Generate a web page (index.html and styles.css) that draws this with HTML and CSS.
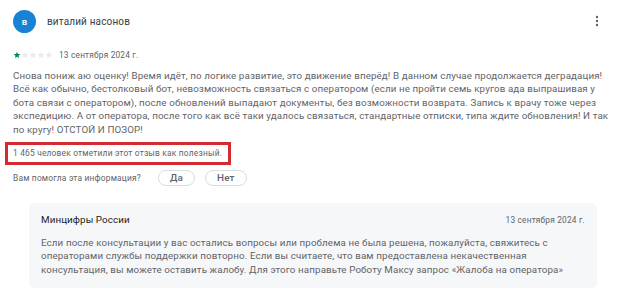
FILE: index.html
```html
<!DOCTYPE html>
<html lang="ru">
<head>
<meta charset="utf-8">
<link rel="stylesheet" href="styles.css">
</head>
<body>
<div class="review">
  <header class="header">
    <div class="avatar">в</div>
    <div class="name">виталий насонов</div>
    <button class="more" aria-label="Ещё">
      <svg width="4" height="12" viewBox="0 0 4 12"><circle cx="2" cy="2" r="1.2"/><circle cx="2" cy="6" r="1.2"/><circle cx="2" cy="10" r="1.2"/></svg>
    </button>
  </header>
  <div class="meta">
    <div class="stars">
      <svg class="star on" viewBox="0 0 24 24"><path d="M12 17.27L18.18 21l-1.64-7.03L22 9.24l-7.19-.61L12 2 9.19 8.63 2 9.24l5.46 4.73L5.82 21z"/></svg>
      <svg class="star" viewBox="0 0 24 24"><path d="M12 17.27L18.18 21l-1.64-7.03L22 9.24l-7.19-.61L12 2 9.19 8.63 2 9.24l5.46 4.73L5.82 21z"/></svg>
      <svg class="star" viewBox="0 0 24 24"><path d="M12 17.27L18.18 21l-1.64-7.03L22 9.24l-7.19-.61L12 2 9.19 8.63 2 9.24l5.46 4.73L5.82 21z"/></svg>
      <svg class="star" viewBox="0 0 24 24"><path d="M12 17.27L18.18 21l-1.64-7.03L22 9.24l-7.19-.61L12 2 9.19 8.63 2 9.24l5.46 4.73L5.82 21z"/></svg>
      <svg class="star" viewBox="0 0 24 24"><path d="M12 17.27L18.18 21l-1.64-7.03L22 9.24l-7.19-.61L12 2 9.19 8.63 2 9.24l5.46 4.73L5.82 21z"/></svg>
    </div>
    <span class="date">13 сентября 2024 г.</span>
  </div>
  <p class="text">Снова пониж аю оценку! Время идёт, по логике развитие, это движение вперёд! В данном случае продолжается деградация!<br>Всё как обычно, бестолковый бот, невозможность связаться с оператором (если не пройти семь кругов ада выпрашивая у<br>бота связи с оператором), после обновлений выпадают документы, без возможности возврата. Запись к врачу тоже через<br>экспедицию. А от оператора, после того как всё таки удалось связаться, стандартные отписки, типа ждите обновления! И так<br>по кругу! ОТСТОЙ И ПОЗОР!</p>
  <div class="helpful">1 465 человек отметили этот отзыв как полезный.</div>
  <div class="ask">
    <span class="ask-label">Вам помогла эта информация?</span>
    <button class="chip">Да</button>
    <button class="chip">Нет</button>
  </div>
  <div class="reply">
    <div class="reply-head">
      <span class="reply-author">Минцифры России</span>
      <span class="reply-date">13 сентября 2024 г.</span>
    </div>
    <p class="reply-text">Если после консультации у вас остались вопросы или проблема не была решена, пожалуйста, свяжитесь с операторами службы поддержки повторно. Если вы считаете, что вам предоставлена некачественная консультация, вы можете оставить жалобу. Для этого направьте Роботу Максу запрос «Жалоба на оператора»</p>
  </div>
</div>
</body>
</html>
```

FILE: styles.css
```css
* { box-sizing: border-box; }
body {
  margin: 0;
  background: #fff;
  font-family: Roboto, "Liberation Sans", Arial, sans-serif;
  color: #5f6368;
}
.review {
  padding: 10px 16px 0 13px;
}
.header {
  display: flex;
  align-items: center;
  height: 22px;
}
.avatar {
  width: 23px;
  height: 23px;
  border-radius: 50%;
  background: #1a82d4;
  color: #fff;
  font-size: 9.5px;
  font-weight: 500;
  display: flex;
  align-items: center;
  justify-content: center;
  flex: none;
}
.name {
  margin-left: 11px;
  font-size: 10px;
  color: #3c4043;
  letter-spacing: 0.15px;
  flex: 1;
}
.more {
  width: 54px;
  height: 22px;
  border: 0;
  padding: 0;
  background: none;
  display: flex;
  align-items: center;
  justify-content: center;
  fill: #5f6368;
}
.meta {
  display: flex;
  align-items: center;
  margin-top: 17px;
  height: 11px;
}
.stars {
  display: flex;
}
.star {
  width: 8px;
  height: 8px;
  fill: #e8eaed;
}
.star.on { fill: #01875f; }
.date {
  margin-left: 6px;
  font-size: 8.3px;
  letter-spacing: 0.2px;
}
.text {
  margin: 9px 0 0;
  font-size: 9.75px;
  line-height: 13.4px;
  letter-spacing: 0.12px;
  color: #5f6368;
}
.helpful {
  display: inline-block;
  margin: 6px 0 0 -8px;
  padding: 3px 6px 3px 5px;
  border: 3px solid #d42a31;
  font-size: 8.4px;
  line-height: 11px;
  letter-spacing: 0.2px;
}
.ask {
  display: flex;
  align-items: center;
  margin-top: 4px;
  height: 17px;
}
.ask-label {
  font-size: 8.4px;
  letter-spacing: 0.2px;
  margin-right: 17px;
}
.chip {
  height: 16px;
  padding: 0 11px;
  margin-right: 10px;
  border: 1px solid #dadce0;
  border-radius: 8px;
  background: #fff;
  font-family: inherit;
  font-size: 9.8px;
  font-weight: 500;
  color: #5f6368;
  letter-spacing: 0.2px;
  line-height: 14px;
}
.reply {
  margin: 17px 27px 0 16px;
  padding: 10px 12px 12px;
  background: #f6f7f9;
  border-radius: 5px;
}
.reply-head {
  display: flex;
  justify-content: space-between;
  align-items: center;
  height: 13px;
}
.reply-author {
  font-size: 9.8px;
  color: #202124;
  letter-spacing: 0.1px;
}
.reply-date {
  font-size: 8.3px;
  letter-spacing: 0.2px;
}
.reply-text {
  margin: 10px 0 0;
  font-size: 9.75px;
  line-height: 13.4px;
  letter-spacing: 0.13px;
}
```
